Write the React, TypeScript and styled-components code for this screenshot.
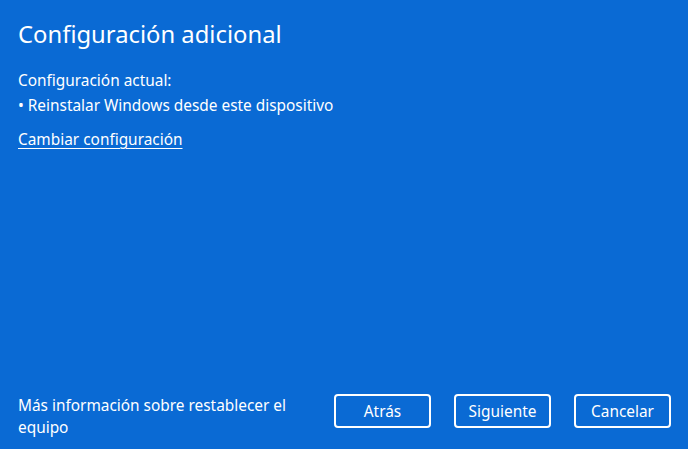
import React from "react";
import styled, { createGlobalStyle } from "styled-components";

const Global = createGlobalStyle`
  html, body { margin: 0; padding: 0; }
  body { background: #0a6ad4; font-family: "Segoe UI", "Noto Sans", "Open Sans", sans-serif; }
`;

const Page = styled.div`
  width: 688px;
  height: 449px;
  box-sizing: border-box;
  background: #0a6ad4;
  color: #fff;
  display: flex;
  flex-direction: column;
  padding: 16px 17px 10px 18px;
`;

const Title = styled.h1`
  margin: 0;
  font-size: 23.8px;
  font-weight: 400;
  line-height: 36px;
`;

const Body = styled.div`
  flex: 1;
  display: flex;
  flex-direction: column;
  margin-top: 16px;
  font-size: 15.4px;
`;

const Line = styled.div`
  line-height: 25px;
`;

const Link = styled.a`
  color: #fff;
  text-decoration: underline;
  text-underline-offset: 3px;
  margin-top: 9px;
  line-height: 25px;
  cursor: pointer;
`;

const Footer = styled.div`
  display: flex;
  align-items: flex-start;
  justify-content: space-between;
`;

const Info = styled.div`
  width: 300px;
  margin-top: 3px;
  font-size: 15.4px;
  line-height: 22px;
`;

const Buttons = styled.div`
  display: flex;
  gap: 23px;
  margin-top: 2px;
`;

const Button = styled.button`
  width: 97px;
  height: 34px;
  box-sizing: border-box;
  border: 2px solid #fff;
  border-radius: 4px;
  background: transparent;
  color: #fff;
  font-family: inherit;
  font-size: 15.4px;
  padding: 0;
`;

export default function App() {
  return (
    <>
      <Global />
      <Page>
        <Title>Configuración adicional</Title>
        <Body>
          <Line>Configuración actual:</Line>
          <Line>• Reinstalar Windows desde este dispositivo</Line>
          <Link>Cambiar configuración</Link>
        </Body>
        <Footer>
          <Info>Más información sobre restablecer el equipo</Info>
          <Buttons>
            <Button>Atrás</Button>
            <Button>Siguiente</Button>
            <Button>Cancelar</Button>
          </Buttons>
        </Footer>
      </Page>
    </>
  );
}
